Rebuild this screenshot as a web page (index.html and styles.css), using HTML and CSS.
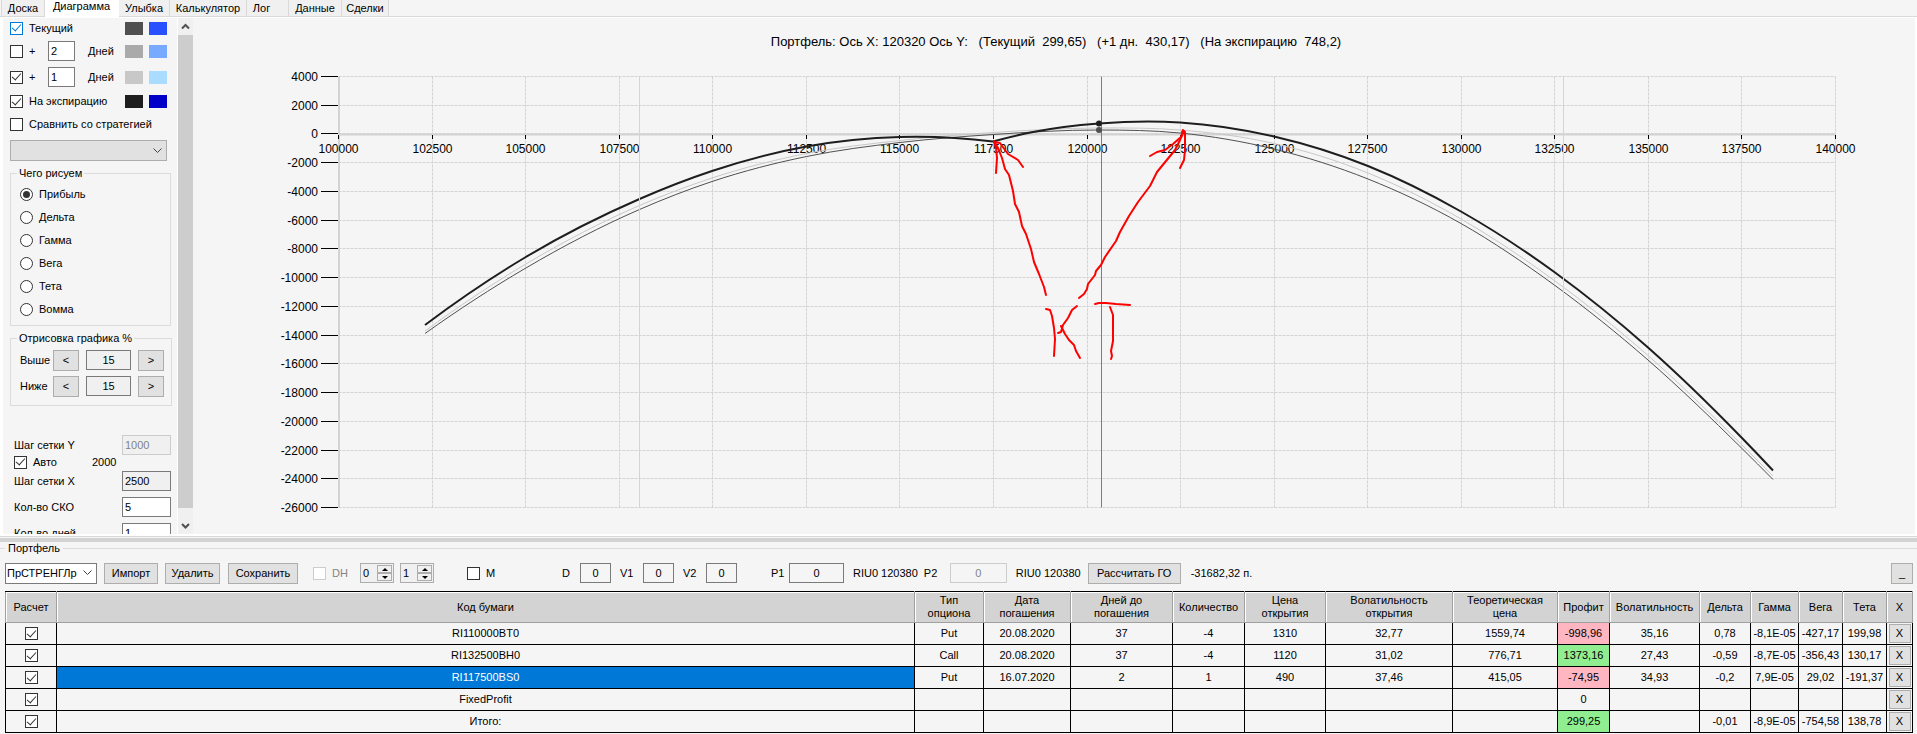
FILE: index.html
```html
<!DOCTYPE html>
<html lang="ru">
<head>
  <meta charset="UTF-8" />
  <meta name="viewport" content="width=device-width, initial-scale=1.0" />
  <title>Диаграмма - Портфель</title>
  <link rel="stylesheet" href="styles.css">
</head>
<body>
  <nav class="tabs">
    <button class="tab tab-board">Доска</button>
    <button class="tab tab-chart active">Диаграмма</button>
    <button class="tab tab-smile">Улыбка</button>
    <button class="tab tab-calc">Калькулятор</button>
    <button class="tab tab-log">Лог</button>
    <button class="tab tab-data">Данные</button>
    <button class="tab tab-deals">Сделки</button>
  </nav>

  <main class="page">
    <aside class="sidebar">
      <div class="settings">
        <div class="line">
          <input type="checkbox" id="cur" class="focused" checked><label for="cur">Текущий</label>
          <span class="swatches"><i class="sw c-dark"></i><i class="sw c-blue"></i></span>
        </div>
        <div class="line tall">
          <input type="checkbox" id="plus2"><label for="plus2" class="plus">+</label>
          <input type="text" class="days" id="days2" value="2"><label for="days2">Дней</label>
          <span class="swatches"><i class="sw c-gray"></i><i class="sw c-sky"></i></span>
        </div>
        <div class="line tall">
          <input type="checkbox" id="plus1" checked><label for="plus1" class="plus">+</label>
          <input type="text" class="days" id="days1" value="1"><label for="days1">Дней</label>
          <span class="swatches"><i class="sw c-light"></i><i class="sw c-pale"></i></span>
        </div>
        <div class="line">
          <input type="checkbox" id="exp" checked><label for="exp">На экспирацию</label>
          <span class="swatches"><i class="sw c-black"></i><i class="sw c-navy"></i></span>
        </div>
        <div class="line">
          <input type="checkbox" id="cmp"><label for="cmp">Сравнить со стратегией</label>
        </div>
        <div class="combo combo-gray">
          <select aria-label="Стратегия"><option></option></select>
          <svg viewBox="0 0 9 6"><path d="M.5.5l4 4 4-4" /></svg>
        </div>

        <fieldset class="box draw-box">
          <legend>Чего рисуем</legend>
          <label><input type="radio" name="draw" checked>Прибыль</label>
          <label><input type="radio" name="draw">Дельта</label>
          <label><input type="radio" name="draw">Гамма</label>
          <label><input type="radio" name="draw">Вега</label>
          <label><input type="radio" name="draw">Тета</label>
          <label><input type="radio" name="draw">Вомма</label>
        </fieldset>

        <fieldset class="box range-box">
          <legend>Отрисовка графика %</legend>
          <div class="range">
            <label for="above">Выше</label><button>&lt;</button>
            <input type="text" id="above" value="15"><button>&gt;</button>
          </div>
          <div class="range">
            <label for="below">Ниже</label><button>&lt;</button>
            <input type="text" id="below" value="15"><button>&gt;</button>
          </div>
        </fieldset>

        <div class="steps">
          <div class="step"><label for="stepy">Шаг сетки Y</label><input type="text" id="stepy" value="1000" disabled></div>
          <div class="auto"><input type="checkbox" id="auto" checked><label for="auto">Авто</label><span>2000</span></div>
          <div class="step"><label for="stepx">Шаг сетки X</label><input type="text" id="stepx" class="filled" value="2500"></div>
          <div class="step"><label for="sko">Кол-во СКО</label><input type="text" id="sko" value="5"></div>
          <div class="step"><label for="daycount">Кол-во дней</label><input type="text" id="daycount" value="1"></div>
        </div>
      </div>
      <div class="scrollbar">
        <svg viewBox="0 0 15 17"><path d="M4 10.5l3.5-3.5 3.5 3.5" /></svg>
        <div class="thumb"></div>
        <svg viewBox="0 0 15 17"><path d="M4 7l3.5 3.5 3.5-3.5" /></svg>
      </div>
    </aside>

    <section class="chart">
      <svg id="chart" viewBox="193 18 1722 516" preserveAspectRatio="xMinYMin"></svg>
    </section>
  </main>

  <div class="splitter"></div>

  <fieldset class="portfolio">
    <legend>Портфель</legend>
    <div class="toolbar">
      <div class="combo combo-name">
        <select aria-label="Портфель"><option>ПрСТРЕНГЛр</option></select>
        <svg viewBox="0 0 9 6"><path d="M.5.5l4 4 4-4" /></svg>
      </div>
      <button class="b-import">Импорт</button>
      <button class="b-delete">Удалить</button>
      <button class="b-save">Сохранить</button>
      <div class="pair dh">
        <input type="checkbox" id="dh" disabled><label for="dh">DH</label>
      </div>
      <div class="spin">
        <input type="text" value="0" aria-label="DH 1">
        <span><button aria-label="Больше"><b class="up"></b></button><button aria-label="Меньше"><b class="down"></b></button></span>
      </div>
      <div class="spin">
        <input type="text" value="1" aria-label="DH 2">
        <span><button aria-label="Больше"><b class="up"></b></button><button aria-label="Меньше"><b class="down"></b></button></span>
      </div>
      <div class="pair m">
        <input type="checkbox" id="m"><label for="m">M</label>
      </div>
      <div class="field f-d"><label for="d">D</label><input type="text" id="d" value="0"></div>
      <div class="field"><label for="v1">V1</label><input type="text" id="v1" value="0"></div>
      <div class="field"><label for="v2">V2</label><input type="text" id="v2" value="0"></div>
      <div class="field f-p1"><label for="p1">P1</label><input type="text" id="p1" value="0"><span>RIU0 120380</span></div>
      <div class="field f-p2"><label for="p2">P2</label><input type="text" id="p2" value="0" disabled><span>RIU0 120380</span></div>
      <button class="b-margin">Рассчитать ГО</button>
      <span class="margin-value">-31682,32 п.</span>
      <button class="b-min">_</button>
    </div>

    <table>
      <colgroup>
        <col class="w51"><col><col class="w69"><col class="w87"><col class="w102"><col class="w72"><col class="w81"><col class="w127"><col class="w105"><col class="w52"><col class="w90"><col class="w51"><col class="w48"><col class="w44"><col class="w44"><col class="w26">
      </colgroup>
      <thead>
        <tr>
          <th>Расчет</th><th>Код бумаги</th><th>Тип<br>опциона</th><th>Дата<br>погашения</th><th>Дней до<br>погашения</th><th>Количество</th><th>Цена<br>открытия</th><th>Волатильность<br>открытия</th><th>Теоретическая<br>цена</th><th>Профит</th><th>Волатильность</th><th>Дельта</th><th>Гамма</th><th>Вега</th><th>Тета</th><th>X</th>
        </tr>
      </thead>
      <tbody>
        <tr>
          <td><input type="checkbox" aria-label="Расчет RI110000BT0" checked></td><td>RI110000BT0</td><td>Put</td><td>20.08.2020</td><td>37</td><td>-4</td><td>1310</td><td>32,77</td><td>1559,74</td><td class="loss">-998,96</td><td>35,16</td><td>0,78</td><td>-8,1E-05</td><td>-427,17</td><td>199,98</td><td class="del"><button>X</button></td>
        </tr>
        <tr>
          <td><input type="checkbox" aria-label="Расчет RI132500BH0" checked></td><td>RI132500BH0</td><td>Call</td><td>20.08.2020</td><td>37</td><td>-4</td><td>1120</td><td>31,02</td><td>776,71</td><td class="gain">1373,16</td><td>27,43</td><td>-0,59</td><td>-8,7E-05</td><td>-356,43</td><td>130,17</td><td class="del"><button>X</button></td>
        </tr>
        <tr>
          <td><input type="checkbox" aria-label="Расчет RI117500BS0" checked></td><td class="selected">RI117500BS0</td><td>Put</td><td>16.07.2020</td><td>2</td><td>1</td><td>490</td><td>37,46</td><td>415,05</td><td class="loss">-74,95</td><td>34,93</td><td>-0,2</td><td>7,9E-05</td><td>29,02</td><td>-191,37</td><td class="del"><button>X</button></td>
        </tr>
        <tr>
          <td><input type="checkbox" aria-label="Расчет FixedProfit" checked></td><td>FixedProfit</td><td></td><td></td><td></td><td></td><td></td><td></td><td></td><td>0</td><td></td><td></td><td></td><td></td><td></td><td class="del"><button>X</button></td>
        </tr>
        <tr>
          <td><input type="checkbox" aria-label="Расчет Итого" checked></td><td>Итого:</td><td></td><td></td><td></td><td></td><td></td><td></td><td></td><td class="gain">299,25</td><td></td><td>-0,01</td><td>-8,9E-05</td><td>-754,58</td><td>138,78</td><td class="del"><button>X</button></td>
        </tr>
      </tbody>
    </table>
  </fieldset>

  <script src="chart.js"></script>
</body>
</html>
```
FILE: styles.css
```css
* {
  box-sizing: border-box;
}
body {
  margin: 0;
  height: 100vh;
  display: flex;
  flex-direction: column;
  overflow: hidden;
  background: #f5f5f5;
  color: #000;
  font-family: "Liberation Sans", Arial, sans-serif;
  font-size: 11px;
  line-height: 13px;
}
button, input, select {
  font: inherit;
  color: inherit;
  margin: 0;
}
button {
  background: #e1e1e1;
  border: 1px solid #adadad;
  padding: 0;
  height: 21px;
}
input[type="text"] {
  height: 20px;
  min-width: 0;
  border: 1px solid #7a7a7a;
  background: #fff;
  padding: 0 2px;
}
input[type="checkbox"], input[type="radio"] {
  appearance: none;
  flex: none;
  width: 13px;
  height: 13px;
  border: 1px solid #333;
  background: #fff;
  display: inline-grid;
  place-content: center;
}
input[type="checkbox"]:checked::before {
  content: "";
  width: 4px;
  height: 8px;
  margin-bottom: 3px;
  border: solid #333;
  border-width: 0 1px 1px 0;
  transform: rotate(42deg);
}
input.focused {
  border-color: #0078d7;
}
input.focused:checked::before {
  border-color: #0078d7;
}
input[type="radio"] {
  border-radius: 50%;
}
input[type="radio"]:checked::before {
  content: "";
  width: 7px;
  height: 7px;
  border-radius: 50%;
  background: #333;
}
input[type="checkbox"]:disabled {
  border-color: #ccc;
}
input[type="text"]:disabled {
  border-color: #ccc;
  background: #f0f0f0;
  color: #838383;
}

/* tabs */
.tabs {
  display: flex;
  flex: none;
  height: 17px;
  padding-left: 1px;
  border-bottom: 1px solid #d9d9d9;
}
.tab {
  height: 16px;
  background: #f0f0f0;
  border: solid #d9d9d9;
  border-width: 0 1px 0 0;
}
.tab.active {
  height: 17px;
  background: #fff;
  border-color: #fff;
  padding-bottom: 4px;
}
.tab-board { width: 44px; border-left-width: 1px; }
.tab-chart { width: 74px; }
.tab-smile { width: 51px; }
.tab-calc { width: 77px; }
.tab-log { width: 42px; padding-right: 12px; }
.tab-data { width: 53px; }
.tab-deals { width: 47px; }

/* tab page */
.page {
  flex: 1;
  min-height: 0;
  display: flex;
  border: solid #fff;
  border-width: 1px 2px 2px 3px;
}
.sidebar {
  flex: none;
  display: flex;
  width: 190px;
}
.settings {
  flex: 1;
  overflow: hidden;
  padding: 0 6px 0 7px;
}
.line {
  display: flex;
  align-items: center;
  height: 23px;
  padding-right: 4px;
}
.line.tall {
  height: 26px;
}
.line:first-child {
  height: 20px;
}
.line label {
  margin-left: 6px;
}
.line .plus {
  width: 19px;
}
.line .days {
  width: 27px;
}
.line .days + label {
  margin-left: 13px;
}
.swatches {
  display: flex;
  gap: 6px;
  margin-left: auto;
}
.sw {
  width: 18px;
  height: 13px;
}
.c-dark { background: #505050; }
.c-blue { background: #2850ff; }
.c-gray { background: #aaa; }
.c-sky { background: #78aaff; }
.c-light { background: #c8c8c8; }
.c-pale { background: #aadcff; }
.c-black { background: #1e1e1e; }
.c-navy { background: #0000c8; }

.combo {
  display: flex;
  align-items: center;
  height: 21px;
}
.combo select {
  appearance: none;
  width: 100%;
  height: 100%;
  padding: 0 1px;
  border: 1px solid #7a7a7a;
  border-radius: 0;
  background: #fff;
}
.combo svg {
  flex: none;
  width: 9px;
  height: 6px;
  margin-left: -14px;
  margin-right: 5px;
  pointer-events: none;
}
.combo path, .scrollbar path {
  fill: none;
  stroke: #444;
}
.combo-gray {
  margin: 4px 4px 0 0;
}
.combo-gray select {
  border-color: #adadad;
  background: #e1e1e1;
}
.box {
  margin: 6px 0 0;
  padding: 0 7px;
  border: 1px solid #dcdcdc;
}
.box legend {
  padding: 0 2px;
}
.draw-box {
  height: 159px;
}
.draw-box legend, .range-box legend {
  margin-left: -1px;
}
.draw-box label {
  display: flex;
  align-items: center;
  gap: 6px;
  height: 23px;
  padding-left: 2px;
}
.draw-box legend + label {
  margin-top: 3px;
}
.range-box {
  height: 74px;
}
.range {
  display: flex;
  align-items: center;
  height: 26px;
  padding-left: 2px;
}
.range-box legend + .range {
  margin-top: 2px;
}
.range label {
  width: 33px;
}
.range button {
  width: 26px;
}
.range input[type="text"] {
  width: 45px;
  margin: 0 7px;
  background: #f0f0f0;
  text-align: center;
}
.steps {
  padding: 26px 0 0 4px;
}
.step {
  display: flex;
  justify-content: space-between;
  align-items: center;
  height: 26px;
}
.step input[type="text"] {
  width: 49px;
}
.step .filled {
  background: #f0f0f0;
}
.auto {
  display: flex;
  align-items: center;
  height: 10px;
  padding-bottom: 2px;
}
.auto label {
  width: 59px;
  margin-left: 6px;
}
.scrollbar {
  display: flex;
  flex-direction: column;
  width: 16px;
  background: #f0f0f0;
  border-left: 1px solid #fff;
}
.scrollbar svg {
  width: 15px;
  height: 17px;
}
.scrollbar path {
  stroke: #505050;
  stroke-width: 2;
}
.thumb {
  flex: 1;
  margin-bottom: 9px;
  background: #cdcdcd;
}

/* chart */
.chart {
  flex: 1;
  min-width: 0;
}
.chart svg {
  display: block;
  width: 100%;
  height: 100%;
}
.chart text {
  font-size: 12px;
  white-space: pre;
}
.chart .title {
  font-size: 13px;
}
.title, .middle {
  text-anchor: middle;
}
.end {
  text-anchor: end;
}
.grid {
  stroke: #d3d3d3;
  stroke-dasharray: 3 1;
}
.axis {
  stroke: #d3d3d3;
  stroke-width: 2;
}
.tick {
  stroke: #000;
}
.sigma {
  stroke: #ffc0cb;
}
.cursor {
  stroke: #708090;
}
.curve, .pen {
  fill: none;
}
.curve-now {
  stroke: #505050;
}
.curve-next {
  stroke: #c8c8c8;
}
.curve-exp {
  stroke: #1e1e1e;
  stroke-width: 2;
}
.pen {
  stroke: #f00;
  stroke-width: 2;
  stroke-linecap: round;
  stroke-linejoin: round;
}

.splitter {
  flex: none;
  height: 6px;
  border-top: 1px solid #d9d9d9;
  background: linear-gradient(#f5f5f5 1px, #d3d3d3 1px);
}

/* portfolio */
.portfolio {
  flex: none;
  min-width: 0;
  margin: 0;
  padding: 0 4px 1px 5px;
  border: 0 solid #dcdcdc;
  border-top-width: 1px;
}
.portfolio legend {
  padding: 0 3px;
  margin-left: 0;
}
.toolbar {
  display: flex;
  align-items: center;
  height: 36px;
  white-space: nowrap;
}
.combo-name {
  width: 92px;
  margin-right: 7px;
}
.b-import { width: 54px; margin-right: 7px; }
.b-delete { width: 55px; margin-right: 8px; }
.b-save { width: 70px; margin-right: 15px; }
.b-margin { width: 93px; margin-left: 7px; }
.b-min { width: 22px; margin-left: auto; }
.margin-value {
  margin-left: 10px;
}
.pair {
  display: flex;
  align-items: center;
  gap: 6px;
}
.dh {
  width: 47px;
  color: #838383;
}
.m {
  width: 62px;
  margin-left: 27px;
}
.spin {
  display: flex;
  width: 34px;
  height: 20px;
  margin-right: 6px;
  padding: 1px;
  border: 1px solid #adadad;
  background: #f0f0f0;
}
.spin input[type="text"] {
  flex: 1;
  width: 0;
  height: 100%;
  padding: 0 1px;
  border: 0;
  background: none;
}
.spin span {
  display: flex;
  flex-direction: column;
  width: 15px;
}
.spin button {
  flex: 1;
  height: 0;
  display: grid;
  place-content: center;
  background: #f0f0f0;
}
.up, .down {
  border: 3px solid transparent;
  border-top-width: 0;
  border-bottom-color: #000;
}
.down {
  border-top: 3px solid #000;
  border-bottom-width: 0;
}
.field {
  display: flex;
  align-items: center;
}
.field label {
  width: 23px;
}
.field input[type="text"] {
  width: 31px;
  margin-right: 9px;
  text-align: center;
  background: #f5f5f5;
}
.f-d {
  margin-left: 33px;
}
.f-d label {
  width: 18px;
}
.f-p1 {
  margin-left: 25px;
}
.f-p1 label {
  width: 18px;
}
.f-p1 input[type="text"] {
  width: 55px;
}
.f-p2 {
  margin-left: 6px;
}
.f-p2 label {
  width: 26px;
}
.f-p2 input[type="text"] {
  width: 57px;
}

table {
  width: 100%;
  table-layout: fixed;
  border-collapse: collapse;
  border: 1px solid #000;
  text-align: center;
}
th {
  height: 31px;
  padding: 0;
  font-weight: normal;
  background: #d3d3d3;
  border: 1px solid #a0a0a0;
  border-top-color: #000;
  box-shadow: inset 1px 1px #fff;
}
td {
  height: 22px;
  padding: 0;
  border: 1px solid #000;
  white-space: nowrap;
}
td input[type="checkbox"] {
  vertical-align: middle;
}
.loss { background: #ffb6c1; }
.gain { background: #90ee90; }
.selected {
  background: #0078d7;
  color: #fff;
}
.del button {
  display: block;
  width: 22px;
  height: 19px;
  margin: 0 auto;
}
.w26 { width: 26px; }
.w44 { width: 44px; }
.w48 { width: 48px; }
.w51 { width: 51px; }
.w52 { width: 52px; }
.w69 { width: 69px; }
.w72 { width: 72px; }
.w81 { width: 81px; }
.w87 { width: 87px; }
.w90 { width: 90px; }
.w102 { width: 102px; }
.w105 { width: 105px; }
.w127 { width: 127px; }
```
FILE: chart.js
```js
const svg = document.getElementById("chart");
const left = 338.5, right = 1835.5, top0 = 76.5, bottom = 507.5, zero = 134.5;

function add(tag, cls, attrs, text) {
  const el = document.createElementNS("http://www.w3.org/2000/svg", tag);
  el.setAttribute("class", cls);
  for (const key in attrs) el.setAttribute(key, attrs[key]);
  if (text !== undefined) el.textContent = text;
  svg.appendChild(el);
}

function line(cls, x1, y1, x2, y2) {
  add("line", cls, { x1, y1, x2, y2 });
}

// pixel centre, so that 1px lines stay sharp
function snap(v) {
  return Math.floor(v) + 0.5;
}

// smooth path through all points, they are not evenly spaced
function spline(p) {
  const last = p.length - 1;
  const w = [], s = [], m = [];
  for (let i = 0; i < last; i++) {
    w[i] = p[i + 1][0] - p[i][0];
    s[i] = (p[i + 1][1] - p[i][1]) / w[i];
  }
  for (let i = 1; i < last; i++) {
    m[i] = (s[i - 1] * w[i] + s[i] * w[i - 1]) / (w[i - 1] + w[i]);
  }
  m[0] = 2 * s[0] - m[1];
  m[last] = 2 * s[last - 1] - m[last - 1];

  let d = `M${p[0]}`;
  for (let i = 0; i < last; i++) {
    const [x1, y1] = p[i], [x2, y2] = p[i + 1], t = w[i] / 3;
    d += `C${x1 + t},${y1 + m[i] * t} ${x2 - t},${y2 - m[i + 1] * t} ${x2},${y2}`;
  }
  return d;
}

add("text", "title", { x: 1056, y: 46 }, "Портфель: Ось X: 120320 Ось Y:   (Текущий  299,65)   (+1 дн.  430,17)   (На экспирацию  748,2)");

const xs = [], ys = [];
for (let v = 100000; v <= 140000; v += 2500) {
  xs.push([v, snap(left + (right - left) * (v - 100000) / 40000)]);
}
for (let v = 4000; v >= -26000; v -= 2000) {
  ys.push([v, snap(top0 + (bottom - top0) * (4000 - v) / 30000)]);
}

xs.slice(1).forEach(([, x]) => line("grid", x, top0, x, bottom));
ys.forEach(([, y]) => line("grid", left, y, right, y));
line("axis", left + 0.5, top0, left + 0.5, bottom);
line("axis", left, zero, right, zero);
xs.forEach(([, x]) => line("tick", x, 135, x, 139));
ys.forEach(([, y]) => line("tick", 321, y, 338, y));
xs.forEach(([v, x]) => add("text", "middle", { x, y: 153 }, v));
ys.forEach(([v, y]) => add("text", "end", { x: 318, y: y + 4 }, v));

const now = [[425, 333.5], [525, 268.5], [639.5, 209.5], [712, 181.5], [806.5, 156.5], [900, 142.5], [993, 134.5], [1099, 130], [1180, 133], [1274, 149], [1368, 179], [1461, 223.5], [1555, 285.5], [1648, 360], [1742, 448.5], [1773, 479.5]];
const next = [[425, 331], [525, 264.5], [639.5, 205.5], [712, 178], [806.5, 153.5], [900, 140.5], [993, 132.5], [1099, 128], [1180, 130], [1274, 143.5], [1368, 173], [1461, 219], [1555, 281], [1648, 355.5], [1742, 445], [1773, 476]];
const expLeft = [[425, 325], [525, 257.5], [639.5, 199], [712, 171], [806.5, 146.5], [900, 137], [993, 141.5]];
const expRight = [[993, 141.5], [1033, 132], [1099, 123.5], [1180, 122.5], [1274, 136.5], [1368, 166], [1461, 211.5], [1555, 272.5], [1648, 347.5], [1742, 438], [1773, 470.5]];

add("path", "curve curve-next", { d: spline(next) });
add("path", "curve curve-now", { d: spline(now) });
add("path", "curve curve-exp", { d: spline(expLeft) });
add("path", "curve curve-exp", { d: spline(expRight) });

line("sigma", 639.5, top0, 639.5, bottom);
line("sigma", 1563.5, top0, 1563.5, bottom);
line("cursor", 1101.5, top0, 1101.5, bottom);
add("circle", "", { cx: 1099, cy: 130, r: 3, fill: "#505050" });
add("circle", "", { cx: 1099, cy: 123.5, r: 3, fill: "#1e1e1e" });

// pen marks
[
  "M1046 295l-2-8-5-13-5-12-3-13-5-15-4-8-3-14-4-8-2-13-4-16-4-6-3-11-4-10-4-7",
  "M994 142l2 6 1 10-1 15",
  "M994 142l6 1 5 7 3 4 10 6 5 7",
  "M1079 298l5-4 3-5 1-5 7-9 1-4 5-6 4-8 11-16 4-9 9-16 9-14 12-16 7-14 9-11 9-11 5-10 4-9",
  "M1150 156l7-4 8-2 8-6 8-7 2-7",
  "M1182 132h3v18l-1 10-4 8",
  "M1046 309l4 1 2 6 2 12 1 11-1 17",
  "M1077 306l-5 4-4 8-5 7-2 7-3 1",
  "M1061 326l4 8 4 6 5 5 2 6 4 7",
  "M1095 304l4-1h7l10 1 14 1",
  "M1110 307l3 8v26l-2 10 1 5-1 3"
].forEach(d => add("path", "pen", { d }));
```
